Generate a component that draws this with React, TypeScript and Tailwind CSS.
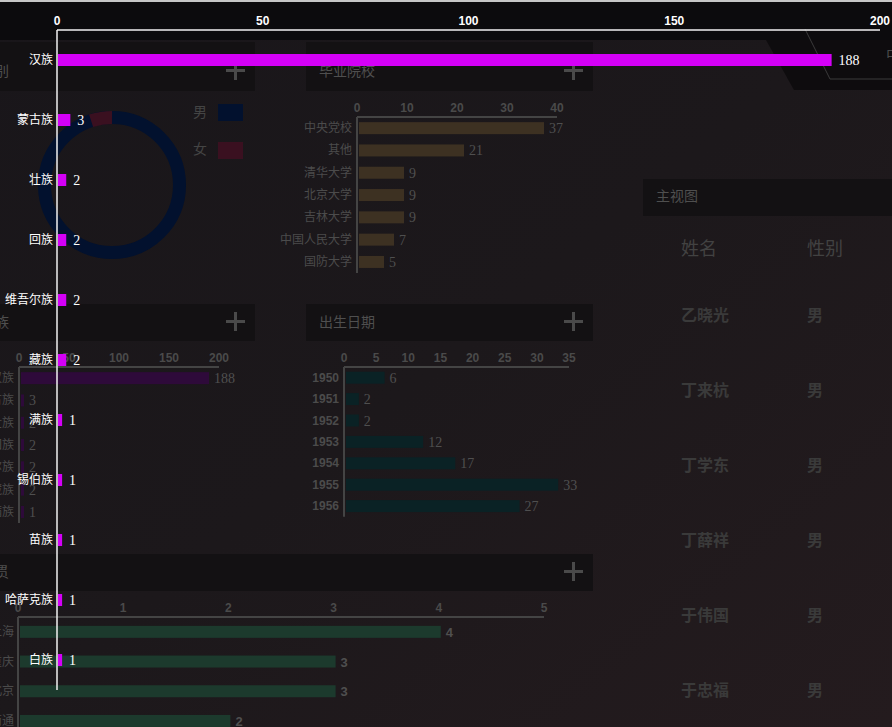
import React from 'react'

type Row = { label: string; value: number }

const narrow = "'Liberation Sans Narrow','Liberation Sans',Arial,sans-serif"
const serif = "'Liberation Serif','Times New Roman',serif"
const cjk = "'Noto Sans CJK SC','Noto Sans',sans-serif"

function PlusIcon() {
  return (
    <svg width="21" height="21" viewBox="0 0 21 21">
      <path d="M10.5 1v19M1 10.5h19" stroke="#4a4a4a" strokeWidth="3" />
    </svg>
  )
}

function Panel({ title, titleH = 37, bodyH, w = 287, children }: { title: string; titleH?: number; bodyH: number; w?: number; children?: React.ReactNode }) {
  return (
    <div className="flex flex-col" style={{ width: w }}>
      <div
        className={`flex items-center justify-between bg-[#131113] pl-[13px] pr-[9px] ${titleH > 40 ? 'h-[49px] pt-[8px]' : 'h-[37px] pb-[2px]'}`}
      >
        <span className="text-[14px] text-[#4f4f4f]">{title}</span>
        <PlusIcon />
      </div>
      <div className="relative" style={{ height: bodyH }}>
        {children}
      </div>
    </div>
  )
}

function HBar({
  rows, x0, scale, axisY, rowH, ticks, color, labelEnd, w, h, axisLen, boldLabels, sansValues, minBar = 3,
}: {
  rows: Row[]; x0: number; scale: number; axisY: number; rowH: number; ticks: number[]; color: string
  labelEnd: number; w: number; h: number; axisLen?: number; boldLabels?: boolean; sansValues?: boolean; minBar?: number
}) {
  const axisEnd = x0 + ticks[ticks.length - 1] * scale
  return (
    <svg width={w} height={h} className="block overflow-visible">
      {ticks.map((t) => (
        <text key={t} x={x0 + t * scale} y={axisY - 5} textAnchor="middle" fontSize="12" fontWeight="bold" fill="#4a4a4a" fontFamily={narrow}>
          {t}
        </text>
      ))}
      <line x1={x0} y1={axisY} x2={axisEnd} y2={axisY} stroke="#444" strokeWidth="2" />
      <line x1={x0} y1={axisY} x2={x0} y2={axisY + (axisLen ?? rows.length * rowH)} stroke="#444" strokeWidth="2" />
      {rows.map((r, i) => {
        const cy = axisY + rowH * (i + 0.5)
        const bw = Math.max(r.value * scale, minBar)
        return (
          <g key={r.label}>
            <text
              x={labelEnd}
              y={cy + 4}
              textAnchor="end"
              fontSize="12"
              fontWeight={boldLabels ? 'bold' : 'normal'}
              fill="#4b4b4b"
              fontFamily={boldLabels ? narrow : cjk}
            >
              {r.label}
            </text>
            <rect x={x0 + 2} y={cy - 6} width={bw} height="12" fill={color} />
            <text
              x={x0 + 2 + bw + 5}
              y={cy + 5}
              fontSize={sansValues ? 13 : 14}
              fontWeight={sansValues ? 'bold' : 'normal'}
              fill="#4f4f4f"
              fontFamily={sansValues ? narrow : serif}
            >
              {r.value}
            </text>
          </g>
        )
      })}
    </svg>
  )
}

function Donut() {
  return (
    <svg width="287" height="213" className="block">
      <circle cx="144" cy="94" r="67.5" fill="none" stroke="#02112e" strokeWidth="13" />
      <path d="M123.1 29.8 A67.5 67.5 0 0 1 144 26.5" fill="none" stroke="#3a1020" strokeWidth="13" />
      <text x="225" y="26" fontSize="14" fill="#444" fontFamily={cjk}>男</text>
      <rect x="250" y="13" width="25" height="17" fill="#02112e" />
      <text x="225" y="63" fontSize="14" fill="#444" fontFamily={cjk}>女</text>
      <rect x="250" y="51" width="25" height="17" fill="#3a1020" />
    </svg>
  )
}

function HeaderDeco() {
  return (
    <svg width="892" height="92" className="absolute left-0 top-0 pointer-events-none">
      <polygon points="766,40 794,90 892,90 892,40" fill="#0e0c0e" />
      <path d="M805 29 L830 79 L892 79" fill="none" stroke="#3a3a3a" strokeWidth="1" />
      <text x="886" y="60" fontSize="15" fill="#4a4a4a" fontFamily={cjk}>中</text>
    </svg>
  )
}

const ethnic: Row[] = [
  { label: '汉族', value: 188 },
  { label: '蒙古族', value: 3 },
  { label: '壮族', value: 2 },
  { label: '回族', value: 2 },
  { label: '维吾尔族', value: 2 },
  { label: '藏族', value: 2 },
  { label: '满族', value: 1 },
  { label: '锡伯族', value: 1 },
  { label: '苗族', value: 1 },
  { label: '哈萨克族', value: 1 },
  { label: '白族', value: 1 },
]

function Overlay() {
  const x0 = 57
  const scale = 4.115
  const top = 30
  const rowH = 60
  return (
    <svg width="892" height="727" className="absolute inset-0 pointer-events-none">
      {[0, 50, 100, 150, 200].map((t) => (
        <text key={t} x={x0 + t * scale} y="25" textAnchor="middle" fontSize="12" fontWeight="bold" fill="#fff" fontFamily={narrow}>
          {t}
        </text>
      ))}
      <line x1={x0} y1={top} x2={880} y2={top} stroke="#f2f2f2" strokeWidth="1.5" />
      <line x1={x0} y1={top} x2={x0} y2={690} stroke="#f2f2f2" strokeWidth="1.5" />
      {ethnic.map((r, i) => {
        const cy = top + rowH * (i + 0.5)
        const bw = Math.max(r.value * scale, 4)
        return (
          <g key={r.label}>
            <text x="53" y={cy + 4} textAnchor="end" fontSize="12" fill="#fff" fontFamily={cjk}>
              {r.label}
            </text>
            <rect x={x0 + 1} y={cy - 6} width={bw} height="12" fill="#d400f7" />
            <text x={x0 + 1 + bw + 7} y={cy + 5} fontSize="14" fill="#fff" fontFamily={serif}>
              {r.value}
            </text>
          </g>
        )
      })}
    </svg>
  )
}

const schools: Row[] = [
  { label: '中央党校', value: 37 },
  { label: '其他', value: 21 },
  { label: '清华大学', value: 9 },
  { label: '北京大学', value: 9 },
  { label: '吉林大学', value: 9 },
  { label: '中国人民大学', value: 7 },
  { label: '国防大学', value: 5 },
]

const minzu: Row[] = [
  { label: '汉族', value: 188 },
  { label: '蒙古族', value: 3 },
  { label: '壮族', value: 2 },
  { label: '回族', value: 2 },
  { label: '维吾尔族', value: 2 },
  { label: '藏族', value: 2 },
  { label: '满族', value: 1 },
]

const births: Row[] = [
  { label: '1950', value: 6 },
  { label: '1951', value: 2 },
  { label: '1952', value: 2 },
  { label: '1953', value: 12 },
  { label: '1954', value: 17 },
  { label: '1955', value: 33 },
  { label: '1956', value: 27 },
]

const places: Row[] = [
  { label: '上海', value: 4 },
  { label: '重庆', value: 3 },
  { label: '北京', value: 3 },
  { label: '南通', value: 2 },
]

const people = [
  ['乙晓光', '男'],
  ['丁来杭', '男'],
  ['丁学东', '男'],
  ['丁薛祥', '男'],
  ['于伟国', '男'],
  ['于忠福', '男'],
]

export default function App() {
  return (
    <div className="relative w-[892px] h-[727px] overflow-hidden bg-gradient-to-br from-[#19161a] via-[#1c181b] to-[#241b1e] font-['Noto_Sans_CJK_SC',sans-serif]">
      <div className="h-[2px] bg-[#c6c6c6]" />
      <div className="h-[38px] bg-[#0c0b0d]" />
      <HeaderDeco />

      <div className="flex ml-[-32px] mt-[2px]">
        <div className="w-[625px] flex flex-col">
          <div className="flex gap-[51px]">
            <Panel title="性别" titleH={49} bodyH={213}>
              <Donut />
            </Panel>
            <Panel title="毕业院校" titleH={49} bodyH={213}>
              <HBar rows={schools} x0={51} scale={5} axisY={26} rowH={22.3} ticks={[0, 10, 20, 30, 40]} color="#3d3122" labelEnd={46} w={287} h={213} />
            </Panel>
          </div>
          <div className="flex gap-[51px]">
            <Panel title="民族" bodyH={213}>
              <HBar rows={minzu} x0={51} scale={1} axisY={26} rowH={22.3} ticks={[0, 50, 100, 150, 200]} color="#2e0a3a" labelEnd={46} w={287} h={213} />
            </Panel>
            <Panel title="出生日期" bodyH={213}>
              <HBar rows={births} x0={38} scale={6.43} axisY={26} rowH={21.4} ticks={[0, 5, 10, 15, 20, 25, 30, 35]} color="#0a2225" labelEnd={33} w={287} h={213} boldLabels />
            </Panel>
          </div>
          <Panel title="籍贯" bodyH={140} w={625}>
            <HBar rows={places} x0={50} scale={105.2} axisY={26} rowH={29.7} ticks={[0, 1, 2, 3, 4, 5]} color="#1c3a2d" labelEnd={46} w={625} h={140} axisLen={130} sansValues />
          </Panel>
        </div>

        <div className="ml-[50px] mt-[137px] w-[260px] flex flex-col">
          <div className="h-[37px] flex items-center bg-[#131113] pl-[13px] pb-[5px]">
            <span className="text-[14px] text-[#4f4f4f]">主视图</span>
          </div>
          <div className="grid grid-cols-[126px_1fr] pl-[38px] h-[62px] items-center text-[18px] text-[#424242]">
            <span>姓名</span>
            <span>性别</span>
          </div>
          {people.map(([n, g]) => (
            <div key={n} className="grid grid-cols-[126px_1fr] pl-[38px] h-[75px] items-center pb-[3px] text-[16px] font-bold text-[#3a3a3a]">
              <span>{n}</span>
              <span>{g}</span>
            </div>
          ))}
        </div>
      </div>

      <Overlay />
    </div>
  )
}
